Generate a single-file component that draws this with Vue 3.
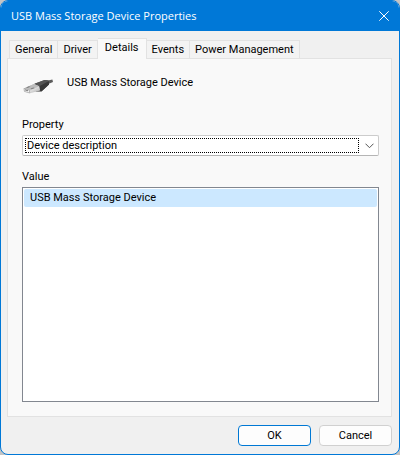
<script setup>
import { ref } from 'vue'

const tabs = ['General', 'Driver', 'Details', 'Events', 'Power Management']
const activeTab = ref('Details')
const property = ref('Device description')
const values = ['USB Mass Storage Device']
const selectedValue = ref(0)
</script>

<template>
  <main class="window">
    <header class="titlebar">
      <h1 class="title">USB Mass Storage Device Properties</h1>
      <button class="close" type="button" aria-label="Close">
        <svg width="10" height="10" viewBox="0 0 10 10" aria-hidden="true">
          <path d="M0.3 0.3L9.7 9.7M9.7 0.3L0.3 9.7" fill="none" stroke="#fff" stroke-width="1" />
        </svg>
      </button>
    </header>

    <div class="body">
      <div class="tabs" role="tablist">
        <button
          v-for="tab in tabs"
          :key="tab"
          type="button"
          role="tab"
          class="tab"
          :class="{ active: tab === activeTab }"
          :aria-selected="tab === activeTab"
          @click="activeTab = tab"
        >{{ tab }}</button>
      </div>

      <section class="panel" role="tabpanel">
        <div class="device">
          <svg class="plug" width="32" height="18" viewBox="0 0 32 18" aria-hidden="true">
            <defs>
              <linearGradient id="shell" x1="0" y1="0" x2="0" y2="1">
                <stop offset="0" stop-color="#6a6a6a" />
                <stop offset="0.5" stop-color="#484848" />
                <stop offset="1" stop-color="#303030" />
              </linearGradient>
              <linearGradient id="metal" x1="0" y1="0" x2="1" y2="1">
                <stop offset="0" stop-color="#8f8f8f" />
                <stop offset="0.6" stop-color="#dcdcdc" />
                <stop offset="1" stop-color="#a8a8a8" />
              </linearGradient>
            </defs>
            <path d="M24 4L30.4 2.4L31 5L25 7.6Z" fill="#5c5c5c" />
            <path d="M12.5 6.8L22.5 3Q25 2.6 26.8 3.8L27 7.6L19.4 14.4L13.8 14.6Z" fill="url(#shell)" />
            <path d="M12.5 6.8L22.5 3Q25 2.6 26.8 3.8L17.6 9.2Z" fill="#555" />
            <path d="M17.6 9.2L26.8 4L27 7.6L19.4 14.4Z" fill="#393939" />
            <path d="M1.8 11.4L12 7L17.2 9.2L18.2 13.4L8 16.2L2.4 14.6Z" fill="url(#metal)" />
            <path d="M1.8 11.4L12 7L17.2 9.2L7.4 13.2Z" fill="#bdbdbd" />
            <path d="M2 11.4L7.2 13L7.8 16L2.4 14.4Z" fill="#f4f4f4" stroke="#a0a0a0" stroke-width="0.7" />
            <path d="M4 10.4L7 9.2L8.6 9.8L5.6 11ZM8.4 11.6L11.4 10.4L12.8 11L9.8 12.2Z" fill="#808080" />
            <path d="M3 12.8L6 13.8" stroke="#777" stroke-width="1" />
          </svg>
          <span class="device-name">USB Mass Storage Device</span>
        </div>

        <label class="label" for="property">Property</label>
        <div class="combo">
          <select id="property" v-model="property">
            <option>Device description</option>
          </select>
          <span class="focus-rect"></span>
          <svg class="chevron" width="9" height="6" viewBox="0 0 9 6" aria-hidden="true">
            <path d="M0.5 0.7L4.5 4.7L8.5 0.7" fill="none" stroke="#555" stroke-width="1" />
          </svg>
        </div>

        <span id="value-label" class="label">Value</span>
        <ul class="list" role="listbox" tabindex="0" aria-labelledby="value-label">
          <li
            v-for="(value, i) in values"
            :key="value"
            role="option"
            class="item"
            :class="{ selected: i === selectedValue }"
            :aria-selected="i === selectedValue"
            @click="selectedValue = i"
          >{{ value }}</li>
        </ul>
      </section>

      <footer class="actions">
        <button class="btn primary" type="button">OK</button>
        <button class="btn" type="button">Cancel</button>
      </footer>
    </div>
  </main>
</template>

<style>
body {
  background: #c4c4c4;
}
</style>

<style scoped>
* {
  box-sizing: border-box;
}

.window {
  display: flex;
  flex-direction: column;
  min-height: 100vh;
  overflow: hidden;
  border: 1px solid #0078d7;
  border-radius: 8px;
  background: #f0f0f0;
  color: #000;
  font-family: Roboto, "Liberation Sans", sans-serif;
  font-size: 11px;
  line-height: 18px;
}

button,
select {
  margin: 0;
  color: inherit;
  font: inherit;
}

.titlebar {
  display: flex;
  align-items: center;
  justify-content: space-between;
  height: 30px;
  padding: 0 10px;
  background: #0078d7;
  color: #fff;
}

.title {
  margin: 0;
  font-family: "Open Sans", "Liberation Sans", sans-serif;
  font-size: 11px;
  font-weight: 400;
}

.close {
  display: flex;
  padding: 0;
  border: 0;
  background: none;
}

.body {
  display: flex;
  flex: 1;
  flex-direction: column;
  padding: 7px 7px 8px 6px;
}

.tabs {
  display: flex;
  align-items: flex-end;
  padding: 0 2px;
}

.tab {
  height: 18px;
  padding: 0 5px;
  border: 1px solid #e2e2e2;
  border-bottom: 0;
  background: #f3f3f3;
  white-space: nowrap;
}

.tab + .tab {
  border-left: 0;
}

.tab.active {
  z-index: 1;
  height: 21px;
  margin-bottom: -1px;
  padding: 0 7px 2px;
  background: #f9f9f9;
}

.panel {
  display: flex;
  flex: 1;
  flex-direction: column;
  padding: 14px 12px 14px 14px;
  border: 1px solid #e2e2e2;
  background: #f9f9f9;
}

.device {
  display: flex;
  gap: 13px;
  height: 43px;
}

.plug {
  margin-top: 4px;
}

.device-name {
  padding-top: 1px;
}

.label {
  margin-bottom: 1px;
}

.combo {
  position: relative;
  margin-bottom: 12px;
}

.combo select {
  display: block;
  width: 100%;
  height: 21px;
  padding: 1px 24px 0 4px;
  border: 1px solid #ccc;
  border-bottom-color: #b5b5b5;
  border-radius: 2px;
  outline: 0;
  background: #fff;
  appearance: none;
}

.focus-rect {
  position: absolute;
  inset: 3px 20px 3px 3px;
  border: 1px dotted #000;
  pointer-events: none;
}

.chevron {
  position: absolute;
  top: 8px;
  right: 5px;
  pointer-events: none;
}

.list {
  flex: 1;
  margin: 0;
  padding: 1px;
  border: 1px solid #828790;
  outline: 0;
  background: #fff;
  list-style: none;
}

.item {
  padding: 0 6px;
  border-radius: 2px;
}

.item.selected {
  background: #cce8ff;
}

.actions {
  display: flex;
  justify-content: flex-end;
  gap: 8px;
  padding-top: 8px;
}

.btn {
  width: 73px;
  height: 21px;
  padding: 0;
  border: 1px solid #d0d0d0;
  border-radius: 4px;
  background: #fdfdfd;
}

.btn.primary {
  border-color: #0078d4;
}
</style>
